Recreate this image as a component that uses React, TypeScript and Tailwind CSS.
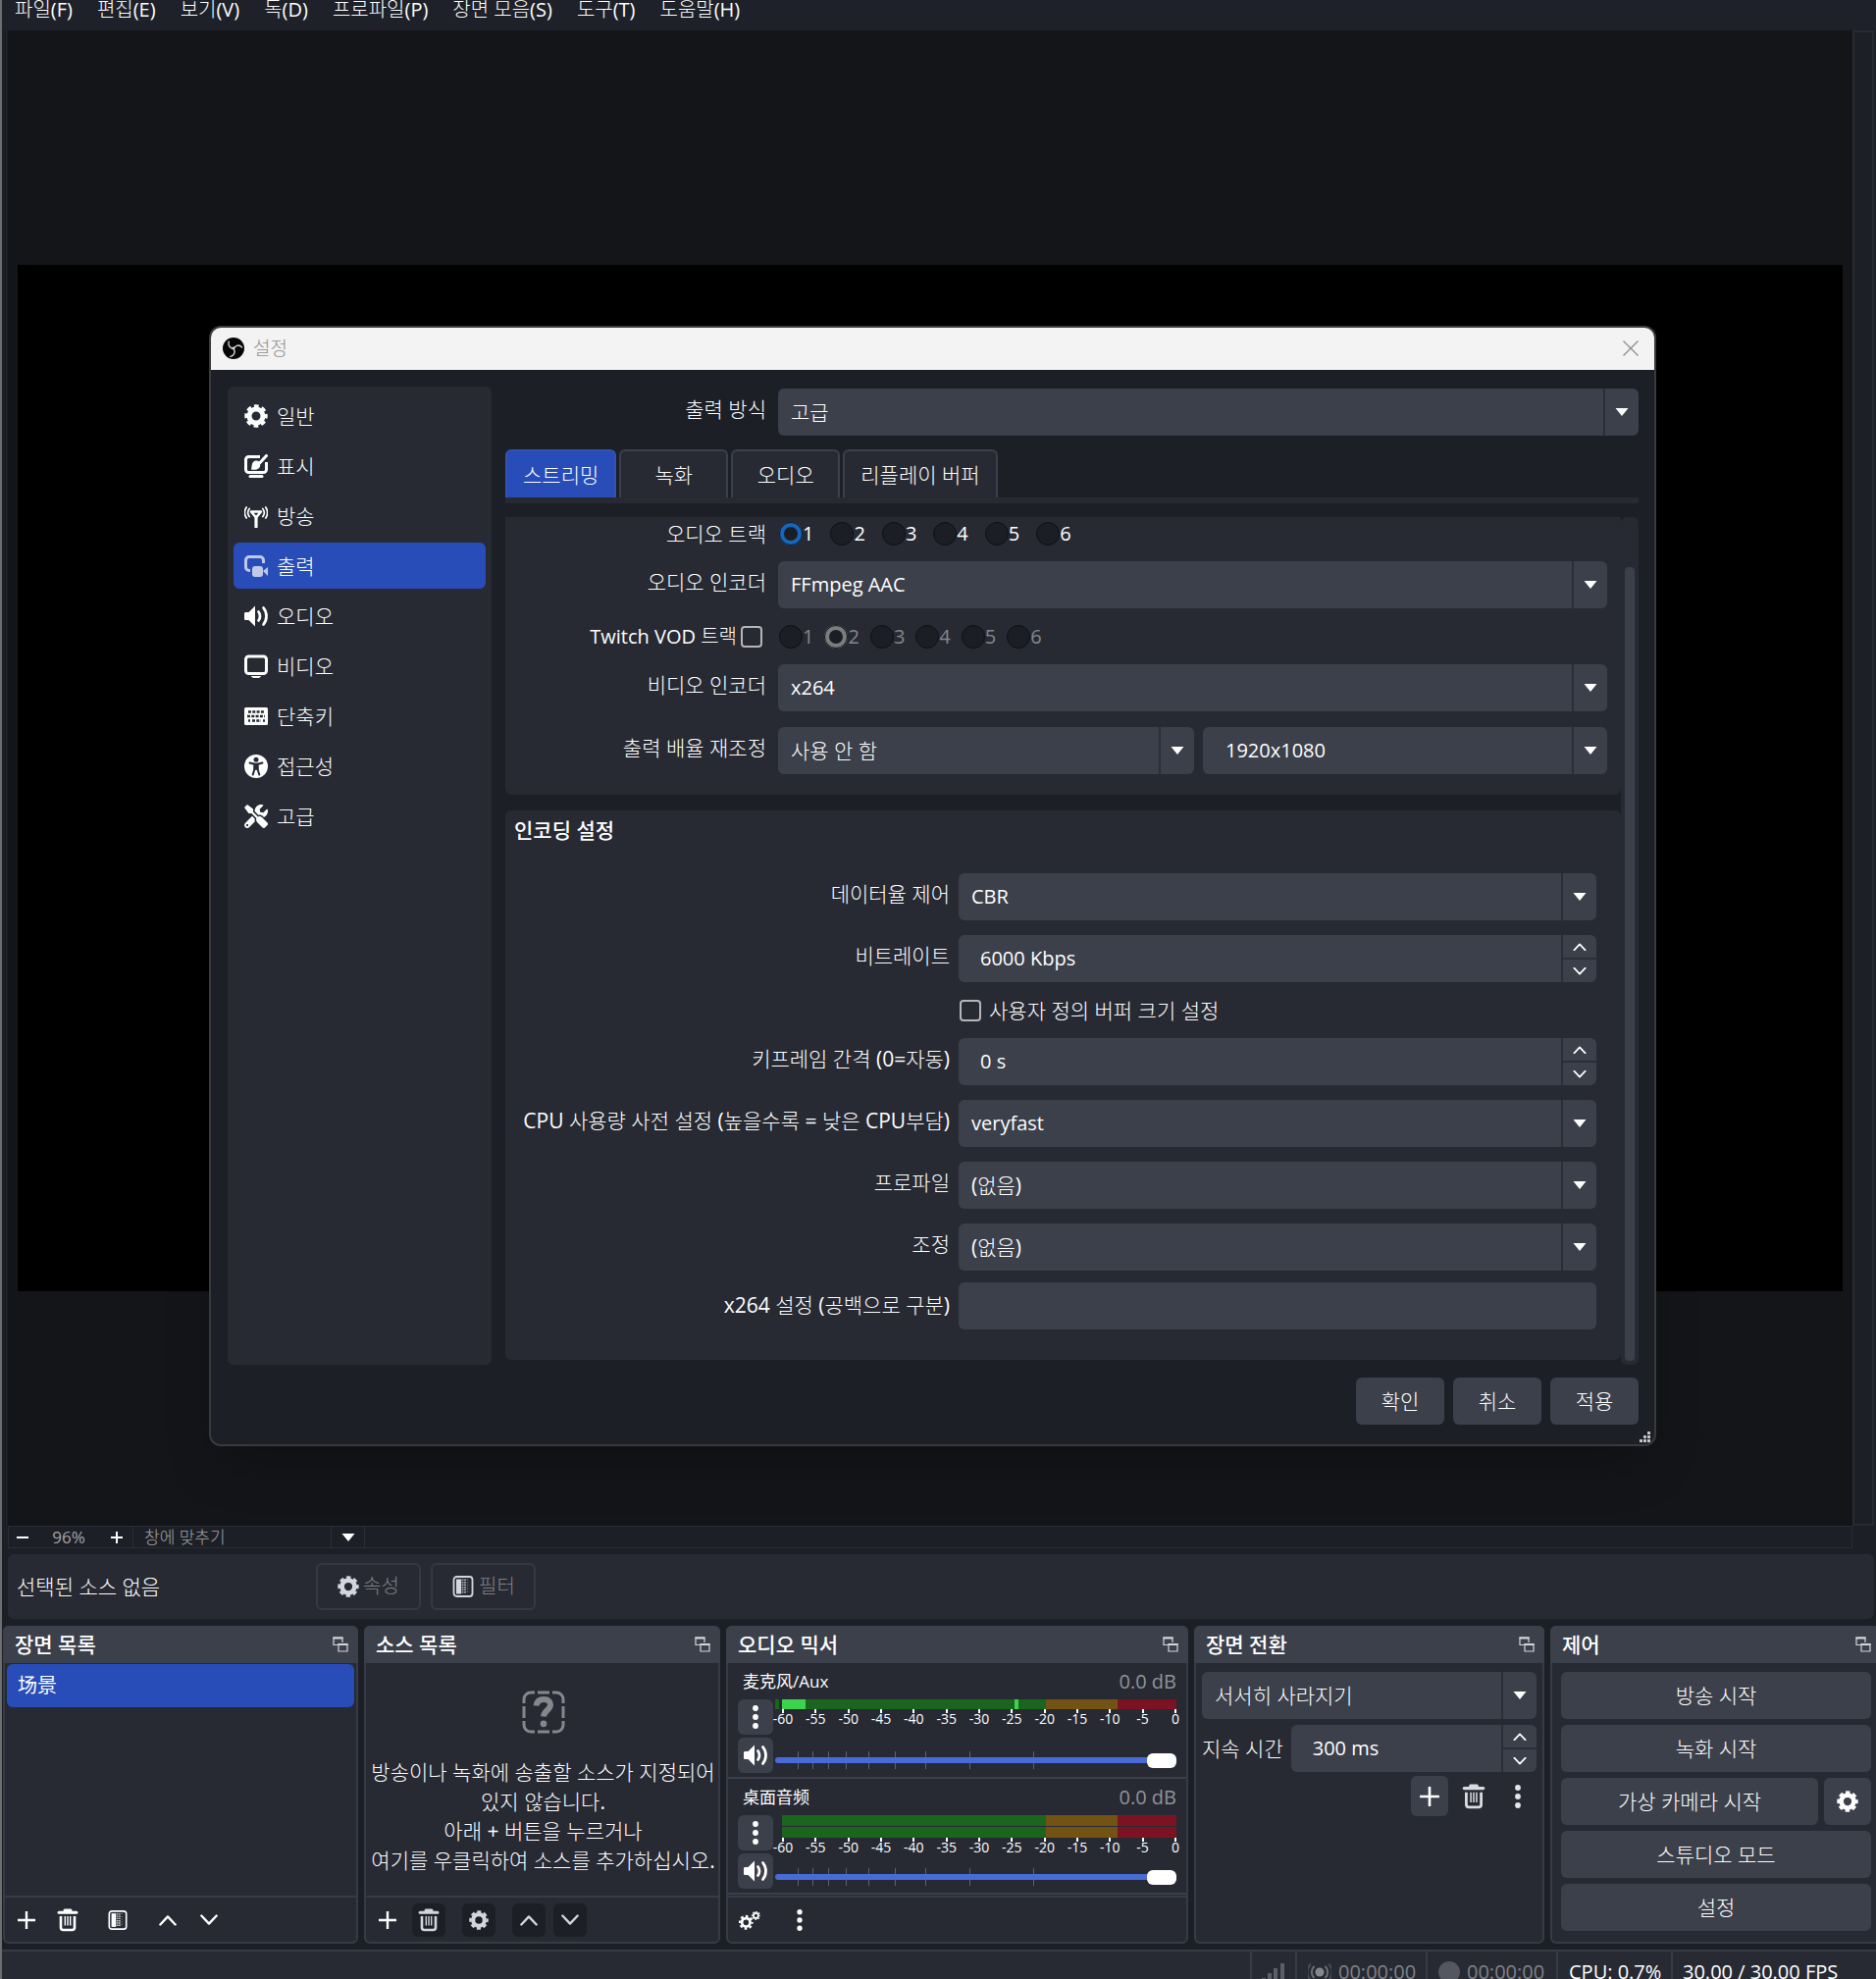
import React, { useState } from 'react';
import { FaTools } from 'react-icons/fa';

type IconProps = { className?: string };

/* ---------- Icons ---------- */

const ObsLogo: React.FC<IconProps> = ({ className }) => (
  <svg viewBox="0 0 24 24" className={className} fill="none">
    <circle cx="12" cy="12" r="12" fill="#050505" />
    <g stroke="#d9d9d9" strokeWidth="1.500" strokeLinecap="round">
      <path d="M12.200 12.500C8 12 5.500 9 6.800 4.600" />
      <path d="M12.200 12.500c2-4 6-5.200 9.300-1.500" />
      <path d="M12.200 12.500c2.200 3.500.8 7.500-3.700 8.700" />
    </g>
    <circle cx="12" cy="12" r="1.600" fill="#d9d9d9" />
  </svg>
);

const GearIcon: React.FC<IconProps> = ({ className }) => (
  <svg viewBox="0 0 24 24" className={className} fill="none" stroke="currentColor">
    <circle cx="12" cy="12" r="7" strokeWidth="5" />
    <circle cx="12" cy="12" r="10.200" strokeWidth="3" strokeDasharray="4.800 3.211" strokeDashoffset="2.400" />
  </svg>
);

const GearsIcon: React.FC<IconProps> = ({ className }) => (
  <svg viewBox="0 0 24 24" className={className} fill="none" stroke="currentColor">
    <circle cx="8" cy="14.500" r="4.600" strokeWidth="3" />
    <circle cx="8" cy="14.500" r="7" strokeWidth="2.200" strokeDasharray="2.900 2.598" strokeDashoffset="1.400" />
    <circle cx="19" cy="7" r="2.700" strokeWidth="1.900" />
    <circle cx="19" cy="7" r="4.200" strokeWidth="1.500" strokeDasharray="1.700 1.599" strokeDashoffset=".8" />
  </svg>
);

const AppearanceIcon: React.FC<IconProps> = ({ className }) => (
  <svg viewBox="0 0 24 24" className={className} fill="none" stroke="currentColor">
    <path d="M16 2.500H4.500a3 3 0 0 0-3 3v10a3 3 0 0 0 3 3h15a3 3 0 0 0 3-3V8" strokeWidth="3" />
    <path d="M6 22.500h12" strokeWidth="3" strokeLinecap="round" />
    <path d="m16 8.500 6.500-7" strokeWidth="3" strokeLinecap="round" />
    <path d="M7 15.500c1-3 0-8 4.500-9 3-.4 5 1.500 4.800 4.500-.3 3.500-3.300 5.500-9.300 4.500z" fill="currentColor" stroke="none" />
  </svg>
);

const StreamIcon: React.FC<IconProps> = ({ className }) => (
  <svg viewBox="0 0 24 24" className={className} fill="none" stroke="currentColor" strokeLinecap="round">
    <path d="M12 13v10" strokeWidth="3.200" />
    <path d="M7 7.500h10l-5 6z" strokeWidth="2.600" strokeLinejoin="round" />
    <path d="M5.200 4.500a6.500 6.500 0 0 0 0 8M18.800 4.500a6.500 6.500 0 0 1 0 8" strokeWidth="1.700" />
    <path d="M2.200 3a10 10 0 0 0 0 11M21.800 3a10 10 0 0 1 0 11" strokeWidth="1.700" />
  </svg>
);

const OutputIcon: React.FC<IconProps> = ({ className }) => (
  <svg viewBox="0 0 24 24" className={className} fill="none" stroke="currentColor">
    <path d="M19.500 9V6a3.500 3.500 0 0 0-3.500-3.500H5A3.500 3.500 0 0 0 1.500 6v7A3.500 3.500 0 0 0 5 16.500h1" strokeWidth="3" />
    <rect x="8" y="12" width="11" height="11" rx="3" fill="currentColor" stroke="none" />
    <path d="m19 17 5-4v9z" fill="currentColor" stroke="none" />
  </svg>
);

const SpeakerIcon: React.FC<IconProps> = ({ className }) => (
  <svg viewBox="0 0 24 24" className={className} fill="none" stroke="currentColor" strokeLinecap="round">
    <path d="M0 9.500c0-1 .6-1.500 1.500-1.500H4.500l6.500-6.500v21L4.500 16H1.500C.6 16 0 15.500 0 14.500z" fill="currentColor" stroke="none" />
    <path d="M14.500 7.500c2 2.500 2 6.500 0 9" strokeWidth="2.800" />
    <path d="M19.500 3.500c4 5 4 12 0 17" strokeWidth="2.800" />
  </svg>
);

const MonitorIcon: React.FC<IconProps> = ({ className }) => (
  <svg viewBox="0 0 24 24" className={className} fill="none" stroke="currentColor">
    <rect x="1.500" y="2" width="21" height="17.500" rx="3" strokeWidth="3" />
    <path d="M6.500 22h11l-2.500 2H9z" fill="currentColor" stroke="none" />
  </svg>
);

const KeyboardIcon: React.FC<IconProps> = ({ className }) => (
  <svg viewBox="0 0 24 24" className={className}>
    <rect x="0" y="3" width="24" height="18" rx="1.500" fill="currentColor" />
    <path
      d="M4 7.500h16M3 12h18M4 16.500h2M8 16.500h9M19 16.500h2"
      stroke="#272a33"
      strokeWidth="2.600"
      strokeDasharray="3 1.300"
    />
  </svg>
);

const AccessIcon: React.FC<IconProps> = ({ className }) => (
  <svg viewBox="0 0 24 24" className={className}>
    <circle cx="12" cy="12" r="12" fill="currentColor" />
    <circle cx="12" cy="5.200" r="2.500" fill="#272a33" />
    <path
      d="M5.500 8.500c4 1.500 9 1.500 13 0M12 10v5M10.500 10.500c.3 4-.5 7-1.800 10M13.500 10.500c-.3 4 .5 7 1.800 10"
      fill="none"
      stroke="#272a33"
      strokeWidth="2"
      strokeLinecap="round"
    />
    <path d="M9.500 9h5v5.500h-5z" fill="#272a33" />
  </svg>
);

const TrashIcon: React.FC<IconProps> = ({ className }) => (
  <svg viewBox="0 0 24 24" className={className} fill="none" stroke="currentColor">
    <path d="M3 4.200h18M9 2h6" strokeWidth="3" strokeLinecap="round" />
    <path d="M5 8v11.500A2.500 2.500 0 0 0 7.500 22h9a2.500 2.500 0 0 0 2.500-2.500V8" strokeWidth="2.600" />
    <path d="M9.300 8v9.500M12 8v9.500M14.700 8v9.500" strokeWidth="1.400" />
  </svg>
);

const FilterIcon: React.FC<IconProps> = ({ className }) => (
  <svg viewBox="0 0 24 24" className={className}>
    <rect x="2.500" y="2" width="19" height="20" rx="3" fill="none" stroke="currentColor" strokeWidth="1.800" />
    <path d="M5 4.500h5v15H5z" fill="currentColor" />
    <path d="M11.500 4.500v15M14 4.500v15" stroke="currentColor" strokeWidth="2" strokeDasharray="1.500 1" opacity=".75" />
    <path d="M16.500 4.500v15" stroke="currentColor" strokeWidth="1.400" strokeDasharray="1 2" opacity=".5" />
  </svg>
);

const PlusIcon: React.FC<IconProps> = ({ className }) => (
  <svg viewBox="0 0 20 20" className={className}>
    <path d="M10 1v18M1 10h18" stroke="currentColor" strokeWidth="2.400" />
  </svg>
);

const ChevronIcon: React.FC<IconProps & { up?: boolean }> = ({ className, up }) => (
  <svg viewBox="0 0 20 12" className={className} fill="none" stroke="currentColor" strokeWidth="2.600">
    <path d={up ? 'm1.500 11 8.500-9 8.500 9' : 'm1.500 1 8.500 9 8.500-9'} strokeLinecap="round" strokeLinejoin="round" />
  </svg>
);

const DotsIcon: React.FC<IconProps> = ({ className }) => (
  <svg viewBox="0 0 24 24" className={className} fill="currentColor">
    <circle cx="12" cy="3" r="2.900" />
    <circle cx="12" cy="12" r="2.900" />
    <circle cx="12" cy="21" r="2.900" />
  </svg>
);

const TriangleIcon: React.FC<IconProps> = ({ className }) => (
  <svg viewBox="0 0 14 8" className={className} fill="#fff">
    <path d="M.5 0h13L7 8z" />
  </svg>
);

const FloatIcon: React.FC<IconProps> = ({ className }) => (
  <svg viewBox="0 0 16 16" className={className} fill="none" stroke="#d5d6da">
    <path d="M5 8.500H1V1h9v5" strokeWidth="1.200" />
    <path d="M.5 1.500h10M5.500 8h10" strokeWidth="2" />
    <path d="M6 7.500h9V15H6z" strokeWidth="1.200" />
  </svg>
);

const UnknownIcon: React.FC<IconProps> = ({ className }) => (
  <svg viewBox="0 0 44 44" className={className} fill="none" stroke="#85878d" strokeWidth="3">
    <path d="M2 13V9a7 7 0 0 1 7-7h4M31 2h4a7 7 0 0 1 7 7v4M42 31v4a7 7 0 0 1-7 7h-4M13 42H9a7 7 0 0 1-7-7v-4" />
    <path d="M16 2h12M16 42h12M2 16v12M42 16v12" />
    <path d="M14.500 15.500c.5-4.500 3.500-6.500 8-6.500 4.300 0 6.500 2.500 6.500 5.500 0 5-6.500 6-7 12" strokeWidth="6" />
    <circle cx="22" cy="33.800" r="3.400" fill="#85878d" stroke="none" />
  </svg>
);

/* ---------- Form controls ---------- */

type ComboProps = { id: string; value: string; label?: string; className?: string };

const Combo: React.FC<ComboProps> = ({ id, value, label, className = '' }) => (
  <div className={`relative flex h-12 min-w-0 flex-1 rounded-md bg-[#3c404b] ${className}`}>
    <select
      id={id}
      aria-label={label}
      className="h-12 w-full min-w-0 appearance-none rounded-md bg-transparent pr-9 pl-[13px] outline-none"
    >
      <option>{value}</option>
    </select>
    <div className="pointer-events-none absolute inset-y-0 right-0 flex w-9 items-center justify-center border-l-2 border-[#2b2e37]">
      <TriangleIcon className="h-2 w-[14px]" />
    </div>
  </div>
);

const Spin: React.FC<ComboProps> = ({ id, value }) => (
  <div className="flex h-12 min-w-0 flex-1 rounded-md bg-[#3c404b] text-[20px]">
    <input id={id} type="text" defaultValue={value} className="w-full min-w-0 flex-1 bg-transparent pl-[22px] outline-none" />
    <div className="flex w-9 flex-col border-l-2 border-[#2b2e37]">
      <button aria-label="증가" className="flex flex-1 items-center justify-center border-b-2 border-[#2b2e37]">
        <ChevronIcon up className="h-2 w-[14px]" />
      </button>
      <button aria-label="감소" className="flex flex-1 items-center justify-center">
        <ChevronIcon className="h-2 w-[14px]" />
      </button>
    </div>
  </div>
);

const FieldLabel: React.FC<{ htmlFor?: string; width: string; children: React.ReactNode }> = ({ htmlFor, width, children }) => (
  <label htmlFor={htmlFor} className={`${width} h-11 shrink-0 text-right leading-[42px] whitespace-nowrap`}>
    {children}
  </label>
);

const Tracks: React.FC<{ name: string; checked: number; disabled?: boolean }> = ({ name, checked, disabled }) => {
  const [value, setValue] = useState(checked);
  return (
    <div className={`flex text-[20px] ${disabled ? 'gap-[11px] text-[#85878d]' : 'gap-[17px]'}`}>
      {[1, 2, 3, 4, 5, 6].map((n) => (
        <label key={n} className="flex items-center">
          <input
            type="radio"
            name={name}
            checked={value === n}
            disabled={disabled}
            onChange={() => setValue(n)}
            className="size-6 appearance-none rounded-full border border-[#0e1014] bg-[#1b1e24] checked:border-[5px] checked:border-[#1766b8] checked:outline checked:-outline-offset-1 checked:outline-[#10151f] disabled:checked:border-[#7d7d7d]"
          />
          {n}
        </label>
      ))}
    </div>
  );
};

const boxClass = 'size-[22px] shrink-0 appearance-none rounded-[4px] border-2 border-[#b4b6bb] checked:bg-[#284cb8]';
const headingFont = "font-['Open_Sans','Noto_Sans_CJK_KR',sans-serif] font-medium";

/* ---------- Settings dialog ---------- */

const sections = [
  { name: '일반', icon: GearIcon },
  { name: '표시', icon: AppearanceIcon },
  { name: '방송', icon: StreamIcon },
  { name: '출력', icon: OutputIcon },
  { name: '오디오', icon: SpeakerIcon },
  { name: '비디오', icon: MonitorIcon },
  { name: '단축키', icon: KeyboardIcon },
  { name: '접근성', icon: AccessIcon },
  { name: '고급', icon: FaTools },
];

const tabs = ['스트리밍', '녹화', '오디오', '리플레이 버퍼'];

const SettingsDialog: React.FC = () => {
  const [section, setSection] = useState('출력');
  const [tab, setTab] = useState('스트리밍');

  return (
    <div
      role="dialog"
      aria-label="설정"
      className="absolute top-[301px] right-[224px] left-[211px] flex flex-col overflow-hidden rounded-xl border-2 border-[#393a3c] bg-[#1d1f26] shadow-2xl"
    >
      <div className="flex h-[43px] shrink-0 items-center justify-between bg-[#f3f3f3] pr-4 pb-[2px] pl-3">
        <div className="flex items-center gap-[9px]">
          <ObsLogo className="size-[22px]" />
          <h1 className="text-[19px] text-[#8e8e8e]">설정</h1>
        </div>
        <button aria-label="닫기">
          <svg viewBox="0 0 16 16" className="size-4" stroke="#8c8c8c" strokeWidth="1.300">
            <path d="m.5.5 15 15M15.500.5l-15 15" />
          </svg>
        </button>
      </div>

      <div className="flex gap-[14px] pt-[17px] pr-4 pl-[17px]">
        <nav className="flex w-[269px] shrink-0 flex-col gap-1 rounded-md bg-[#272a33] p-[6px]">
          {sections.map((s) => (
            <button
              key={s.name}
              onClick={() => setSection(s.name)}
              className={`flex h-[47px] items-center gap-[9px] rounded-md pl-[11px] ${section === s.name ? 'bg-[#284cb8]' : ''}`}
            >
              <s.icon className={`size-6 ${section === s.name ? 'opacity-70' : ''}`} />
              {s.name}
            </button>
          ))}
        </nav>

        <div className="flex min-w-0 flex-1 flex-col">
          <div className="flex gap-3 pt-[2px]">
            <FieldLabel htmlFor="mode" width="w-[266px]">출력 방식</FieldLabel>
            <Combo id="mode" value="고급" />
          </div>

          <div role="tablist" className="mt-[14px] flex gap-[3px] border-b-[6px] border-[#272a33]">
            {tabs.map((t) => (
              <button
                key={t}
                role="tab"
                aria-selected={tab === t}
                onClick={() => setTab(t)}
                className={`h-[49px] min-w-[111px] rounded-t-md border-2 border-b-0 px-4 ${
                  tab === t ? 'border-[#3253b4] bg-[#284cb8]' : 'border-[#3c404b] bg-[#272a33]'
                }`}
              >
                {t}
              </button>
            ))}
          </div>

          <div className="mt-[14px] flex">
            <div className="min-w-0 flex-1">
              <section className="flex flex-col gap-4 rounded-b-md bg-[#272a33] pt-1 pr-[14px] pb-[21px]">
                <div className="flex h-[25px] items-center gap-[13px]">
                  <span className="w-[266px] shrink-0 text-right">오디오 트랙</span>
                  <Tracks name="track" checked={1} />
                </div>
                <div className="flex gap-3">
                  <FieldLabel htmlFor="aenc" width="w-[266px]">오디오 인코더</FieldLabel>
                  <Combo id="aenc" value="FFmpeg AAC" className="text-[20px]" />
                </div>
                <div className="flex h-[25px] items-center">
                  <label className="flex w-[262px] items-center justify-end gap-1 text-[20px] whitespace-nowrap">
                    Twitch VOD 트랙
                    <input type="checkbox" className={boxClass} />
                  </label>
                  <div className="pl-[17px]">
                    <Tracks name="vod" checked={2} disabled />
                  </div>
                </div>
                <div className="flex gap-3">
                  <FieldLabel htmlFor="venc" width="w-[266px]">비디오 인코더</FieldLabel>
                  <Combo id="venc" value="x264" className="text-[20px]" />
                </div>
                <div className="flex gap-3">
                  <FieldLabel htmlFor="rescale" width="w-[266px]">출력 배율 재조정</FieldLabel>
                  <div className="grid min-w-0 flex-1 grid-cols-[424fr_412fr] gap-[9px]">
                    <Combo id="rescale" value="사용 안 함" />
                    <Combo id="size" label="해상도" value="1920x1080" className="pl-[10px] text-[20px]" />
                  </div>
                </div>
              </section>

              <section className="mt-4 rounded-md bg-[#272a33] pt-2 pr-[25px] pb-[31px] pl-[9px]">
                <h2 className={`leading-6 ${headingFont}`}>인코딩 설정</h2>
                <div className="mt-8 flex flex-col gap-[15px]">
                  <div className="flex gap-[9px]">
                    <FieldLabel htmlFor="rate" width="w-[444px]">데이터율 제어</FieldLabel>
                    <Combo id="rate" value="CBR" className="text-[20px]" />
                  </div>
                  <div className="flex gap-[9px]">
                    <FieldLabel htmlFor="bitrate" width="w-[444px]">비트레이트</FieldLabel>
                    <Spin id="bitrate" value="6000 Kbps" />
                  </div>
                  <label className="flex h-[27px] items-center gap-2 pl-[454px]">
                    <input type="checkbox" className={boxClass} />
                    사용자 정의 버퍼 크기 설정
                  </label>
                  <div className="flex gap-[9px]">
                    <FieldLabel htmlFor="keyint" width="w-[444px]">키프레임 간격 (0=자동)</FieldLabel>
                    <Spin id="keyint" value="0 s" />
                  </div>
                  <div className="flex gap-[9px]">
                    <FieldLabel htmlFor="preset" width="w-[444px]">CPU 사용량 사전 설정 (높을수록 = 낮은 CPU부담)</FieldLabel>
                    <Combo id="preset" value="veryfast" className="text-[20px]" />
                  </div>
                  <div className="flex gap-[9px]">
                    <FieldLabel htmlFor="profile" width="w-[444px]">프로파일</FieldLabel>
                    <Combo id="profile" value="(없음)" />
                  </div>
                  <div className="flex gap-[9px]">
                    <FieldLabel htmlFor="tune" width="w-[444px]">조정</FieldLabel>
                    <Combo id="tune" value="(없음)" />
                  </div>
                </div>
                <div className="mt-3 flex items-center gap-[9px]">
                  <FieldLabel htmlFor="opts" width="w-[444px]">x264 설정 (공백으로 구분)</FieldLabel>
                  <input id="opts" type="text" className="h-12 min-w-0 flex-1 rounded-md bg-[#3c404b] px-3 outline-none" />
                </div>
              </section>
            </div>
            {/* 스크롤바 */}
            <div className="-mb-[5px] flex w-[18px] rounded-md bg-[#272a33] px-1 pt-[51px] pb-1">
              <div className="flex-1 rounded-sm bg-[#3c404b]" />
            </div>
          </div>
          <div className="h-[5px]" />
        </div>
      </div>

      <div className="flex justify-end gap-[9px] px-4 pt-[13px] pb-5">
        {['확인', '취소', '적용'].map((b) => (
          <button key={b} className="h-12 w-[90px] rounded-md bg-[#3c404b]">
            {b}
          </button>
        ))}
      </div>
      <svg viewBox="0 0 11 11" className="absolute right-1 bottom-[2px] size-[11px]" fill="#c4c6ca">
        <path d="M8 0h3v3H8zM4 4h3v3H4zM8 4h3v3H8zM0 8h3v3H0zM4 8h3v3H4zM8 8h3v3H8z" />
      </svg>
    </div>
  );
};

/* ---------- Docks ---------- */

const Dock: React.FC<{ title: string; last?: boolean; children: React.ReactNode }> = ({ title, last, children }) => (
  <section className={`flex min-w-0 flex-col rounded-md border-2 border-[#373b45] bg-[#272a33] ${last ? 'rounded-r-none border-r-0' : ''}`}>
    <header className={`-mx-[2px] -mt-[2px] flex h-[38px] shrink-0 items-center justify-between rounded-t-md bg-[#3c404b] pl-3 ${last ? 'pr-[7px]' : 'pr-[10px]'}`}>
      <h2 className={headingFont}>{title}</h2>
      <button aria-label="분리">
        <FloatIcon className="size-4" />
      </button>
    </header>
    {children}
  </section>
);

const ToolButton: React.FC<{ label: string; dark?: boolean; children: React.ReactNode }> = ({ label, dark, children }) => (
  <button
    aria-label={label}
    className={`flex size-[34px] items-center justify-center rounded-md ${dark ? 'bg-[#1d1f26] text-[#d3d6de]' : ''}`}
  >
    {children}
  </button>
);

const Channel: React.FC<{ name: string; mono?: boolean }> = ({ name, mono }) => (
  <div className="h-[118px] border-b-2 border-[#3c404b] px-[10px]">
    <div className="flex h-[37px] items-center justify-between pl-[5px]">
      <span className="font-['Open_Sans','Noto_Sans_CJK_SC',sans-serif] text-[17px]">{name}</span>
      <span className="text-[20px] text-[#919399]">0.0 dB</span>
    </div>
    <div className="flex gap-[2px]">
      <div className="flex flex-col gap-[3px]">
        <button aria-label="메뉴" className="flex size-9 items-center justify-center rounded-md bg-[#3c404b]">
          <DotsIcon className="size-6" />
        </button>
        <button aria-label="음소거" className="flex size-9 items-center justify-center rounded-md bg-[#3c404b]">
          <SpeakerIcon className="size-6" />
        </button>
      </div>
      <div className="flex min-w-0 flex-1 flex-col">
        <div className="flex">
          <div className={`mr-[3px] w-1 ${mono ? 'bg-[#1b651e]' : ''}`} />
          <div className={`relative flex flex-1 ${mono ? 'h-[10px]' : 'h-[23px]'}`}>
            <div className="w-[67%] bg-[#1b651e]" />
            <div className="w-[18%] bg-[#725313]" />
            <div className="w-[15%] bg-[#7c1322]" />
            {mono ? (
              <>
                <div className="absolute inset-y-0 left-0 w-[6%] bg-[#3dd34e]" />
                <div className="absolute inset-y-0 left-[59%] w-1 bg-[#3dd34e]" />
              </>
            ) : (
              <div className="absolute inset-x-0 top-[11px] h-px bg-[#272a33]" />
            )}
          </div>
        </div>
        <div className="flex h-[19px] justify-between pr-px pl-2 text-[14px] leading-3">
          {[-60, -55, -50, -45, -40, -35, -30, -25, -20, -15, -10, -5, 0].map((db) => (
            <div key={db} className="flex w-0 flex-col items-center">
              <span className="h-1 w-[2px] shrink-0 bg-white" />
              {db}
            </div>
          ))}
        </div>
        <div className={`relative flex h-[18px] items-center ${mono ? 'mt-6' : 'mt-3'}`}>
          {[5.6, 9.2, 13.3, 17.7, 23.2, 29.8, 37.5, 48.5, 64.2].map((x) => (
            <span key={x} className="absolute inset-y-0 w-px bg-[#5f626c]" style={{ left: `${x}%` }} />
          ))}
          <input
            type="range"
            aria-label={name}
            defaultValue={100}
            className="relative h-[6px] w-full appearance-none rounded-full bg-[#476bd7] [&::-webkit-slider-thumb]:h-[15px] [&::-webkit-slider-thumb]:w-[30px] [&::-webkit-slider-thumb]:appearance-none [&::-webkit-slider-thumb]:rounded-md [&::-webkit-slider-thumb]:bg-white"
          />
        </div>
      </div>
    </div>
  </div>
);

const menus = ['파일(F)', '편집(E)', '보기(V)', '독(D)', '프로파일(P)', '장면 모음(S)', '도구(T)', '도움말(H)'];

const footerClass = 'mt-auto flex h-[47px] items-center gap-2 border-t-2 border-[#373b45] pl-[5px]';
const controlClass = 'h-12 rounded-md bg-[#3c404b]';

const App: React.FC = () => {
  return (
    <div className="relative flex h-screen flex-col overflow-hidden border-l-2 border-[#6c6e70] bg-[#1d1f26] font-['Open_Sans','Noto_Sans_CJK_KR_Light','Noto_Sans_CJK_KR_DemiLight','Noto_Sans_CJK_KR',sans-serif] text-[21px] leading-6 text-white">
      <nav className="flex h-[31px] shrink-0 gap-[25px] bg-[#1e2129] pl-[13px] text-[20px] leading-5">
        {menus.map((m) => (
          <button key={m} className="h-5">
            {m}
          </button>
        ))}
      </nav>

      {/* 미리보기 */}
      <main className="relative flex min-h-0 flex-1 pl-[6px]">
        <div className="flex flex-1 items-center bg-[#141519] px-[10px]">
          <div className="aspect-video w-full bg-black" />
        </div>
        <div className="mr-[2px] w-[22px] border-2 border-[#272a33]" />
        <SettingsDialog />
      </main>

      <div className="mr-6 mb-[6px] ml-[6px] flex h-[23px] shrink-0 items-center border border-[#2a2d36] text-[17px] text-[#a3a5aa]">
        <button aria-label="축소" className="w-7 pl-2 text-white">
          <svg viewBox="0 0 12 12" className="size-3" stroke="currentColor" strokeWidth="2">
            <path d="M0 6h12" />
          </svg>
        </button>
        <span className="w-[66px] text-center">96%</span>
        <button aria-label="확대" className="w-8 pl-[10px] text-white">
          <svg viewBox="0 0 12 12" className="size-3" stroke="currentColor" strokeWidth="2">
            <path d="M0 6h12M6 0v12" />
          </svg>
        </button>
        <div className="flex h-full w-[237px] items-center border-x border-[#2a2d36]">
          <select aria-label="배율" className="h-5 flex-1 appearance-none bg-transparent pl-[11px] leading-5 outline-none">
            <option>창에 맞추기</option>
          </select>
          <div className="flex h-full w-[34px] items-center justify-center border-l border-[#2a2d36]">
            <TriangleIcon className="h-2 w-[14px]" />
          </div>
        </div>
      </div>

      <div className="mr-[2px] ml-[6px] flex h-[66px] shrink-0 items-center rounded-md bg-[#272a33] pl-[9px]">
        <span className="w-[305px]">선택된 소스 없음</span>
        <div className="flex gap-[10px] text-[20px] text-[#7f8188]">
          <button className="flex h-12 w-[107px] items-center justify-center gap-1 rounded-md border-2 border-[#363943]">
            <GearIcon className="size-[22px] text-[#d3d6de]" />
            속성
          </button>
          <button className="flex h-12 w-[107px] items-center justify-center gap-1 rounded-md border-2 border-[#363943]">
            <FilterIcon className="size-6 text-[#d3d6de]" />
            필터
          </button>
        </div>
      </div>

      <div className="mt-[7px] mb-[6px] ml-px grid h-[324px] shrink-0 grid-cols-[362fr_363fr_471fr_357fr_332fr] gap-[6px]">
        <Dock title="장면 목록">
          <div className="mx-[2px] mt-px flex h-11 items-center rounded-md bg-[#284cb8] pl-[11px] font-['Open_Sans','Noto_Sans_CJK_SC',sans-serif] text-[20px]">
            场景
          </div>
          <div className={footerClass}>
            <ToolButton label="추가"><PlusIcon className="size-5" /></ToolButton>
            <ToolButton label="삭제"><TrashIcon className="size-6" /></ToolButton>
            <span className="w-px" />
            <ToolButton label="필터"><FilterIcon className="size-[22px]" /></ToolButton>
            <span className="w-px" />
            <ToolButton label="위로"><ChevronIcon up className="h-3 w-[18px]" /></ToolButton>
            <ToolButton label="아래로"><ChevronIcon className="h-3 w-[18px]" /></ToolButton>
          </div>
        </Dock>

        <Dock title="소스 목록">
          <div className="flex flex-col items-center pt-7 pl-[2px]">
            <UnknownIcon className="size-11" />
            <p className="mt-6 text-center leading-[30px] whitespace-nowrap">
              방송이나 녹화에 송출할 소스가 지정되어
              <br />
              있지 않습니다.
              <br />
              아래 + 버튼을 누르거나
              <br />
              여기를 우클릭하여 소스를 추가하십시오.
            </p>
          </div>
          <div className={footerClass}>
            <ToolButton label="추가"><PlusIcon className="size-5" /></ToolButton>
            <ToolButton label="삭제" dark><TrashIcon className="size-6" /></ToolButton>
            <span className="w-px" />
            <ToolButton label="속성" dark><GearIcon className="size-5" /></ToolButton>
            <span className="w-px" />
            <ToolButton label="위로" dark><ChevronIcon up className="h-3 w-[18px]" /></ToolButton>
            <ToolButton label="아래로" dark><ChevronIcon className="h-3 w-[18px]" /></ToolButton>
          </div>
        </Dock>

        <Dock title="오디오 믹서">
          <Channel name="麦克风/Aux" mono />
          <Channel name="桌面音频" />
          <div className={footerClass}>
            <ToolButton label="고급 오디오 속성"><GearsIcon className="size-[22px]" /></ToolButton>
            <span className="w-px" />
            <ToolButton label="메뉴"><DotsIcon className="size-[22px]" /></ToolButton>
          </div>
        </Dock>

        <Dock title="장면 전환">
          <div className="px-[6px] pt-[9px]">
            <div className="flex">
              <Combo id="transition" label="장면 전환" value="서서히 사라지기" />
            </div>
            <div className="mt-[6px] flex items-center gap-2">
              <label htmlFor="duration">지속 시간</label>
              <Spin id="duration" value="300 ms" />
            </div>
            <div className="mt-1 flex items-center justify-end">
              <button aria-label="추가" className="flex h-[41px] w-[38px] items-center justify-center rounded-md bg-[#3c404b]">
                <PlusIcon className="size-[22px]" />
              </button>
              <button aria-label="삭제" className="ml-[7px] flex h-[41px] w-[38px] items-center justify-center text-[#d9dbe2]">
                <TrashIcon className="size-[26px]" />
              </button>
              <button aria-label="메뉴" className="ml-[7px] flex h-[41px] w-[38px] items-center justify-center text-[#e6e7ec]">
                <DotsIcon className="size-6" />
              </button>
            </div>
          </div>
        </Dock>

        <Dock title="제어" last>
          <div className="flex flex-col gap-[6px] pt-[9px] pr-[5px] pl-[9px]">
            <button className={controlClass}>방송 시작</button>
            <button className={controlClass}>녹화 시작</button>
            <div className="flex gap-[6px]">
              <button className={`${controlClass} flex-1`}>가상 카메라 시작</button>
              <button aria-label="가상 카메라 설정" className={`${controlClass} flex w-12 items-center justify-center`}>
                <GearIcon className="size-[22px]" />
              </button>
            </div>
            <button className={controlClass}>스튜디오 모드</button>
            <button className={controlClass}>설정</button>
          </div>
        </Dock>
      </div>

      <footer className="flex h-[30px] shrink-0 justify-end overflow-hidden border-t-2 border-[#373b45] bg-[#272a33] text-[20px] leading-[42px]">
        <div className="flex w-[46px] justify-center border-l-2 border-[#373b45] pt-3">
          <svg viewBox="0 0 24 20" className="h-5 w-6" stroke="#5c5f67" strokeWidth="4">
            <path d="M2 20v-5M8 20V10M14 20V5M21 20V0" />
          </svg>
        </div>
        <div className="flex w-[133px] gap-[7px] border-l-2 border-[#373b45] pl-[11px] text-[#808288]">
          <svg viewBox="0 0 24 24" className="mt-[9px] size-6" fill="none" stroke="#5c5f67" strokeWidth="2">
            <circle cx="12" cy="12" r="4.500" fill="#85878d" stroke="none" />
            <path d="M6.500 6a8 8 0 0 0 0 12M17.500 6a8 8 0 0 1 0 12" stroke="#6d7077" />
            <path d="M3 3.500a12 12 0 0 0 0 17M21 3.500a12 12 0 0 1 0 17" stroke="#484b54" />
          </svg>
          00:00:00
        </div>
        <div className="flex w-[133px] gap-[7px] border-l-2 border-[#373b45] pl-[11px] text-[#808288]">
          <span className="mt-[10px] size-[22px] rounded-full bg-[#54575f]" />
          00:00:00
        </div>
        <div className="w-[117px] border-l-2 border-[#373b45] pl-[11px]">CPU: 0.7%</div>
        <div className="w-[209px] border-l-2 border-[#373b45] pl-[10px]">30.00 / 30.00 FPS</div>
      </footer>
    </div>
  );
};

export default App;
